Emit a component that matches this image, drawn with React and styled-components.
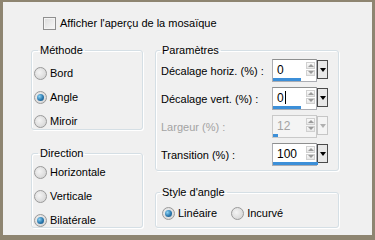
import React from 'react';
import styled, { createGlobalStyle } from 'styled-components';

//Styles
const Global = createGlobalStyle`
  html, body {
    margin: 0;
    padding: 0;
    background: #f0f0f0;
  }
`;

const Frame = styled.div`
  box-sizing: border-box;
  width: 375px;
  height: 240px;
  border-style: solid;
  border-color: #8e8571;
  border-width: 2px 3px 5px 3px;
  background: #f0f0f0;
  font-family: 'Liberation Sans', Arial, sans-serif;
  font-size: 11px;
  color: #000;
  padding: 14px 0 0 28px;
`;

const TopRow = styled.label`
  display: flex;
  align-items: center;
  gap: 4px;
  height: 14px;
  margin-left: 12px;
`;

const CheckBox = styled.span`
  box-sizing: border-box;
  width: 13px;
  height: 13px;
  border: 1px solid #8f8f8f;
  background: linear-gradient(135deg, #dcdcdc, #f8f8f8);
  box-shadow: inset 0 0 0 1px #f4f4f4;
`;

const Columns = styled.div`
  display: grid;
  grid-template-columns: 112px 184px;
  column-gap: 12px;
  margin-top: 13px;
`;

const Column = styled.div`
  display: flex;
  flex-direction: column;
  gap: ${p => p.gap}px;
`;

const Group = styled.fieldset`
  box-sizing: border-box;
  margin: 0;
  padding: ${p => p.pad || '0 0 0 2px'};
  height: ${p => p.h}px;
  border: 1px solid #d5dfe5;
  border-radius: 3px;
  box-shadow: 1px 1px 0 #fff, inset 1px 1px 0 #fff;
  display: flex;
  flex-direction: column;
  gap: ${p => p.gap || 0}px;
`;

const Legend = styled.legend`
  padding: 0 2px;
  margin-left: 4px;
  line-height: 14px;
`;

const Options = styled.div`
  display: flex;
  gap: 14px;
  padding-left: 6px;
`;

const RadioRow = styled.label`
  display: flex;
  align-items: center;
  gap: 3px;
  height: 14px;
  color: #000;
`;

const RadioDot = styled.span`
  box-sizing: border-box;
  width: 13px;
  height: 13px;
  border-radius: 50%;
  border: 1px solid #9a9a9a;
  background: radial-gradient(circle at 40% 40%, #f4f4f4 0%, #dadada 70%, #cfcfcf 100%);
  display: flex;
  align-items: center;
  justify-content: center;

  &::after {
    content: '';
    display: ${p => (p.on ? 'block' : 'none')};
    width: 7px;
    height: 7px;
    border-radius: 50%;
    background: radial-gradient(circle at 35% 35%, #8cd3f5 0%, #2a78ae 55%, #164f7a 100%);
  }
`;

const ParamRow = styled.div`
  display: flex;
  align-items: center;
  height: 23px;
  padding-left: 5px;
  color: ${p => (p.disabled ? '#a3a3a3' : '#000')};
`;

const ParamLabel = styled.span`
  width: 111px;
  white-space: nowrap;
`;

const Spin = styled.div`
  display: flex;
  height: 23px;
`;

const Field = styled.div`
  box-sizing: border-box;
  position: relative;
  width: 45px;
  height: 23px;
  border: 1px solid ${p => (p.disabled ? '#c9c9c9' : '#abadb3')};
  border-top-color: ${p => (p.disabled ? '#c9c9c9' : '#8e8f8f')};
  background: ${p => (p.disabled ? '#f4f4f4' : '#fff')};
  display: flex;
`;

const Value = styled.span`
  flex: 1;
  padding: 3px 0 0 4px;
  font-size: 12px;
  color: ${p => (p.disabled ? '#a3a3a3' : '#000')};
`;

const Caret = styled.span`
  display: inline-block;
  width: 1px;
  height: 13px;
  background: #000;
  vertical-align: -2px;
  margin-left: 1px;
`;

const Arrows = styled.div`
  width: 9px;
  margin: 2px 1px 5px 0;
  display: flex;
  flex-direction: column;
  gap: 1px;
`;

const ArrowBtn = styled.div`
  flex: 1;
  border: 1px solid #d0d0d0;
  background: linear-gradient(#fafafa, #e6e6e6);
  display: flex;
  align-items: center;
  justify-content: center;

  &::after {
    content: '';
    border-left: 3px solid transparent;
    border-right: 3px solid transparent;
    ${p => (p.up ? 'border-bottom' : 'border-top')}: 3px solid #9a9a9a;
  }
`;

const Bar = styled.div`
  position: absolute;
  left: 0;
  bottom: 0;
  height: 3px;
  background: #3c8fd8;
`;

const Drop = styled.div`
  box-sizing: border-box;
  width: 11px;
  height: 19px;
  margin-top: 1px;
  border: 1px solid ${p => (p.disabled ? '#c6c6c6' : '#4a4a4a')};
  background: ${p => (p.disabled ? '#f4f4f4' : '#e8e8e8')};
  display: flex;
  align-items: center;
  justify-content: center;

  &::after {
    content: '';
    border-left: 3px solid transparent;
    border-right: 3px solid transparent;
    border-top: 4px solid ${p => (p.disabled ? '#b0b0b0' : '#000')};
  }
`;

//Data
const methods = [
  { id: 'bord', label: 'Bord' },
  { id: 'angle', label: 'Angle', on: true },
  { id: 'miroir', label: 'Miroir' },
];

const directions = [
  { id: 'h', label: 'Horizontale' },
  { id: 'v', label: 'Verticale' },
  { id: 'b', label: 'Bilatérale', on: true },
];

const params = [
  { id: 'dh', label: 'Décalage horiz. (%) :', value: '0', bar: 28 },
  { id: 'dv', label: 'Décalage vert. (%) :', value: '0', bar: 28, caret: true },
  { id: 'lg', label: 'Largeur (%) :', value: '12', bar: 5, disabled: true },
  { id: 'tr', label: 'Transition (%) :', value: '100', bar: 45 },
];

function Radio({ label, on }) {
  return (
    <RadioRow>
      <RadioDot on={on ? 1 : 0} />
      {label}
    </RadioRow>
  );
}

//Component
export default function App() {
  return (
    <>
      <Global />
      <Frame>
        <TopRow>
          <CheckBox />
          Afficher l'aperçu de la mosaïque
        </TopRow>
        <Columns>
          <Column gap={16}>
            <Group h={87} pad="9px 0 0 2px" gap={10}>
              <Legend>Méthode</Legend>
              {methods.map(m => (
                <Radio key={m.id} {...m} />
              ))}
            </Group>
            <Group h={82} pad="5px 0 0 2px" gap={10}>
              <Legend>Direction</Legend>
              {directions.map(d => (
                <Radio key={d.id} {...d} />
              ))}
            </Group>
          </Column>
          <Column gap={14}>
            <Group h={128} pad="2px 0 0 0" gap={5}>
              <Legend>Paramètres</Legend>
              {params.map(p => (
                <ParamRow key={p.id} disabled={p.disabled}>
                  <ParamLabel>{p.label}</ParamLabel>
                  <Spin>
                    <Field disabled={p.disabled}>
                      <Value disabled={p.disabled}>
                        {p.value}
                        {p.caret && <Caret />}
                      </Value>
                      <Arrows>
                        <ArrowBtn up />
                        <ArrowBtn />
                      </Arrows>
                      <Bar style={{ width: `${p.bar}px` }} />
                    </Field>
                    <Drop disabled={p.disabled} />
                  </Spin>
                </ParamRow>
              ))}
            </Group>
            <Group h={43} pad="7px 0 0 0">
              <Legend>Style d'angle</Legend>
              <Options>
                <Radio label="Linéaire" on />
                <Radio label="Incurvé" />
              </Options>
            </Group>
          </Column>
        </Columns>
      </Frame>
    </>
  );
}
